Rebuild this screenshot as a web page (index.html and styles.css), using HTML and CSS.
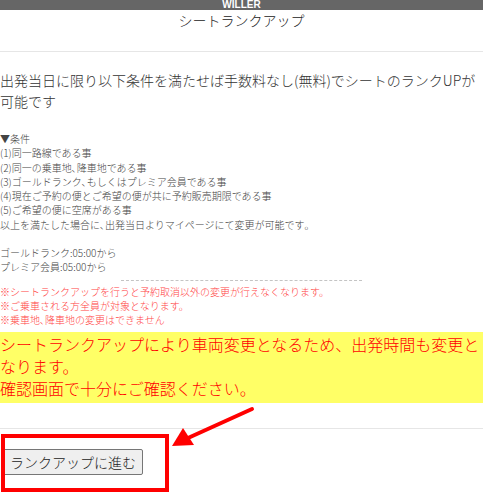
FILE: index.html
```html
<!DOCTYPE html>
<html lang="ja">
<head>
<meta charset="utf-8">
<title>シートランクアップ</title>
<link rel="stylesheet" href="styles.css">
</head>
<body>
<div class="topbar">WILLER</div>
<h1 class="title">シートランクアップ</h1>
<hr class="rule">
<p class="lead">出発当日に限り以下条件を満たせば手数料なし(無料)でシートのランクUPが可能です</p>
<div class="conds">
  <div>▼条件</div>
  <div>(1)同一路線である事</div>
  <div>(2)同一の乗車地､降車地である事</div>
  <div>(3)ゴールドランク､もしくはプレミア会員である事</div>
  <div>(4)現在ご予約の便とご希望の便が共に予約販売期限である事</div>
  <div>(5)ご希望の便に空席がある事</div>
  <div>以上を満たした場合に､出発当日よりマイページにて変更が可能です｡</div>
  <div class="times">
    <div>ゴールドランク:05:00から</div>
    <div>プレミア会員:05:00から</div>
  </div>
</div>
<hr class="dash">
<div class="notes">
  <div>※シートランクアップを行うと予約取消以外の変更が行えなくなります。</div>
  <div>※ご乗車される方全員が対象となります。</div>
  <div>※乗車地､降車地の変更はできません</div>
</div>
<div class="warn">シートランクアップにより車両変更となるため、出発時間も変更となります。<br>確認画面で十分にご確認ください。</div>
<hr class="rule rule2">
<div class="actions">
  <button class="btn" type="button">ランクアップに進む</button>
</div>
<div class="mark"></div>
<svg class="arrow" width="90" height="50" viewBox="0 0 90 50">
  <line x1="82" y1="5" x2="18" y2="34" stroke="#ff0000" stroke-width="4" stroke-linecap="round"/>
  <polygon points="2,42 13,24 24,41" fill="#ff0000"/>
</svg>
</body>
</html>
```
FILE: styles.css
```css
html, body {
  margin: 0;
  padding: 0;
  background: #fff;
}
body {
  font-family: "Noto Sans CJK JP", "Liberation Sans", sans-serif;
  font-weight: 300;
  color: #333;
  position: relative;
  width: 483px;
  height: 494px;
  overflow: hidden;
}
.topbar {
  height: 10px;
  background: #666;
  color: #fff;
  font-family: "Liberation Sans", Arial, sans-serif;
  font-weight: bold;
  font-size: 10px;
  line-height: 10px;
  text-align: center;
}
.title {
  margin: 0;
  font-size: 14px;
  font-weight: 300;
  line-height: 20px;
  text-align: center;
  color: #222;
}
.rule {
  margin: 21px 0 0;
  border: 0;
  border-top: 1px solid #e6e6e6;
  height: 0;
}
.lead {
  margin: 18px 0 0;
  font-size: 14px;
  line-height: 21px;
  color: #333;
}
.conds {
  margin-top: 20px;
  font-size: 10px;
  line-height: 14.3px;
  color: #444;
}
.times {
  margin-top: 14px;
}
.dash {
  width: 50%;
  margin: 5px auto 0;
  border: 0;
  border-top: 1px dashed #c4c4c4;
  height: 0;
}
.notes {
  margin-top: 4px;
  font-size: 10px;
  line-height: 14px;
  color: #ff4444;
}
.warn {
  margin-top: 5px;
  background: #ffff66;
  color: #ff0000;
  font-size: 16px;
  line-height: 22px;
  padding: 1px 0 4px;
}
.rule2 {
  margin-top: 25px;
}
.actions {
  padding: 20px 0 0 3px;
}
.btn {
  font-family: "Noto Sans CJK JP", sans-serif;
  font-weight: 300;
  font-size: 14px;
  height: 26px;
  padding: 0 6px;
  background: #efefef;
  border: 1px solid #767676;
  border-radius: 2px;
  color: #222;
}
.mark {
  position: absolute;
  left: 1px;
  top: 434px;
  width: 160px;
  height: 50px;
  border: 4px solid #ff0000;
}
.arrow {
  position: absolute;
  left: 170px;
  top: 404px;
}
```
